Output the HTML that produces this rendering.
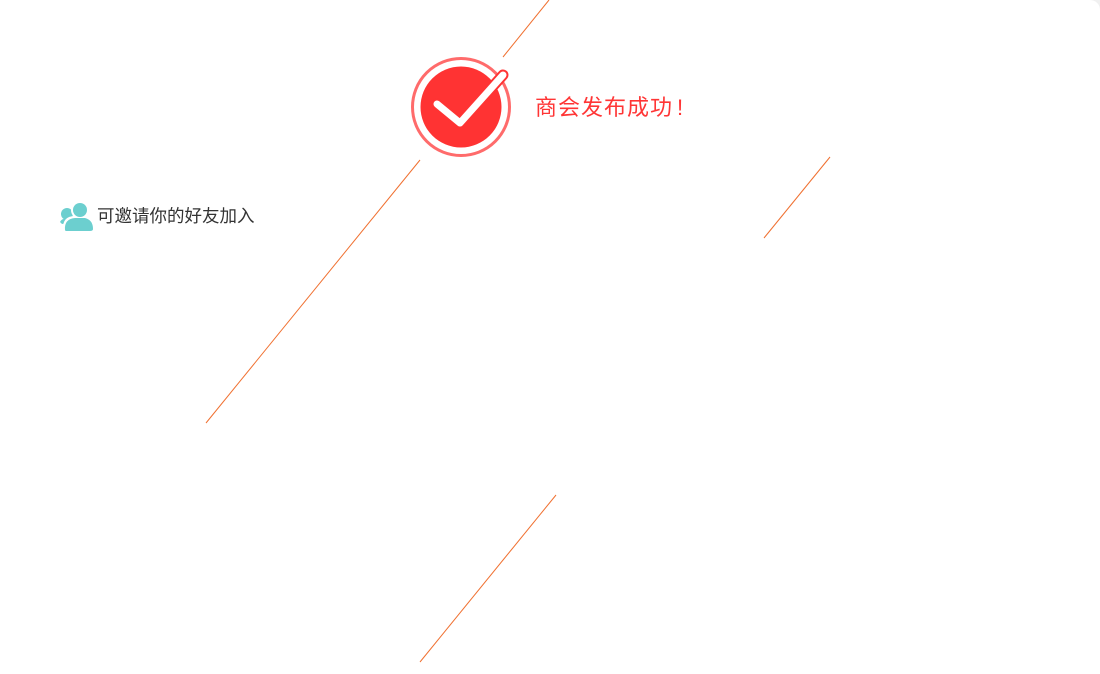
<!DOCTYPE html>
<html><head><meta charset="utf-8"><style>
html,body{margin:0;padding:0;width:1100px;height:674px;overflow:hidden;background:#f0f0f0;}
.page{position:absolute;left:0;top:0;width:1100px;height:674px;background:#fff;border-top-right-radius:10px;}
.t1{position:absolute;left:535px;top:90px;font:22px "Liberation Sans","Noto Sans CJK SC",sans-serif;color:#ff3535;white-space:nowrap;letter-spacing:1px;}
.t1 span{margin-left:4px;}
.t2{position:absolute;left:97px;top:203px;font:17.5px "Liberation Sans","Noto Sans CJK SC",sans-serif;color:#333;white-space:nowrap;}
</style></head><body><div class="page">
<svg width="1100" height="674" style="position:absolute;left:0;top:0">
<g stroke="#f07030" stroke-width="1">
<line x1="549" y1="0" x2="503" y2="57"/>
<line x1="420" y1="160" x2="206" y2="423"/>
<line x1="830" y1="157" x2="764" y2="238"/>
<line x1="556" y1="495" x2="420" y2="662"/>
</g>
<circle cx="461" cy="107" r="48.5" fill="#fff" stroke="#ff6b6b" stroke-width="3"/>
<circle cx="461" cy="107" r="40.5" fill="#ff3333"/>
<polyline points="437,104 460,123 503,75" fill="none" stroke="#ff3333" stroke-width="11" stroke-linecap="round" stroke-linejoin="round"/>
<polyline points="437,104 460,123 503,75" fill="none" stroke="#fff" stroke-width="7" stroke-linecap="round" stroke-linejoin="round"/>
<g fill="#6ccfcf">
<circle cx="67" cy="214" r="6"/>
<path d="M60 222 Q62 218 67 219 L70 223 L62 224 Z"/>
</g>
<g fill="#fff"><circle cx="80" cy="210" r="9"/><path d="M63 230 Q62 216 75 216 L87 216 Q95 218 95 232 Z"/></g>
<g fill="#6ccfcf">
<circle cx="80" cy="210" r="7"/>
<path d="M65 230 Q64 219 75 218 L85 218 Q93 220 93 229 Q93 231 90 231 L67 231 Q65 231 65 230 Z"/>
</g>
</svg>
<div class="t1">商会发布成功<span>!</span></div>
<div class="t2">可邀请你的好友加入</div>
</div></body></html>
